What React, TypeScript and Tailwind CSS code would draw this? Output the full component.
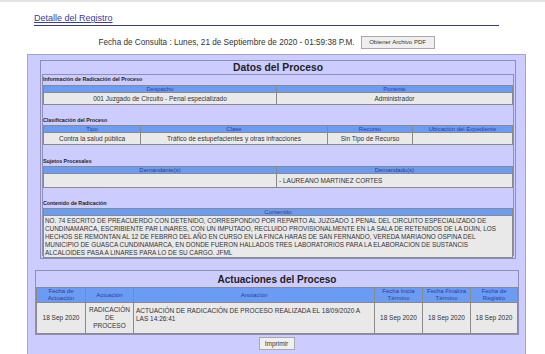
import React from 'react';

// celdas de tabla (rejilla con bordes)
const hd = 'h-[7px] bg-[#6b9cf4] text-[#2c3c9c] border-r border-b border-[#8a8a8a] text-center text-[6px] leading-[6px] whitespace-nowrap overflow-hidden';
const cell = 'bg-[#e9e9e9] text-[#333] border-r border-b border-[#8a8a8a] text-[6.5px] leading-[8px] flex items-center overflow-hidden whitespace-nowrap';

const Label: React.FC<{ text: string; className: string }> = ({ text, className }) => (
  <div className={`text-[5.3px] font-bold text-[#222] ${className}`}>{text}</div>
);

export default function App() {
  const contenido = [
    'NO. 74 ESCRITO DE PREACUERDO CON DETENIDO, CORRESPONDIO POR REPARTO AL JUZGADO 1 PENAL DEL CIRCUITO ESPECIALIZADO DE',
    'CUNDINAMARCA, ESCRIBIENTE PAR LINARES, CON UN IMPUTADO, RECLUIDO PROVISIONALMENTE EN LA SALA DE RETENIDOS DE LA DIJIN, LOS',
    'HECHOS SE REMONTAN AL 12 DE FEBRRO DEL AÑO EN CURSO EN LA FINCA HARAS DE SAN FERNANDO, VEREDA MARIAONO OSPINA DEL',
    'MUNICIPIO DE GUASCA CUNDINAMARCA, EN DONDE FUERON HALLADOS TRES LABORATORIOS PARA LA ELABORACION DE SUSTANCIS',
    'ALCALOIDES PASA A LINARES PARA LO DE SU CARGO. JFML',
  ];

  return (
    <div className="h-screen overflow-hidden bg-white font-['Liberation_Sans',Arial,sans-serif] text-[#333]">
      <div className="h-[2px] bg-[#e4e4e4]" />

      {/* encabezado */}
      <div className="ml-[34px] w-[465px] pt-[11px]">
        <div className="border-b border-[#3a3a80] pb-px text-[9px] leading-[11px]">
          <a className="text-[#3a3aa0] underline">Detalle del Registro</a>
        </div>
        <div className="mt-[10px] flex h-[13px] items-center justify-center gap-[6px]">
          <span className="text-[8.2px] leading-[10px] text-[#333]">
            Fecha de Consulta : Lunes, 21 de Septiembre de 2020 - 01:59:38 P.M.
          </span>
          <button className="h-[13px] w-[74px] border border-[#a9a9a9] bg-[#efefef] text-[6px] leading-[11px] text-[#333]">
            Obtener Archivo PDF
          </button>
        </div>
      </div>

      {/* contenedor lila */}
      <div className="ml-[27px] mt-[5px] h-[320px] w-[499px] border border-[#a4a4d4] bg-[#ccccff] pt-[5px]">
        {/* Datos del Proceso */}
        <div className="ml-[12px] w-[476px] border border-[#8e8eb8]">
          <div className="h-[13px] text-center text-[10.3px] font-bold leading-[13px] text-[#222]">Datos del Proceso</div>
          <div className="mx-px mb-[2px] h-[182px] border border-[#8e8eb8]">
            <Label text="Información de Radicación del Proceso" className="h-[10px] leading-[9px]" />
            <div className="grid grid-cols-[233px_1fr] border-l border-t border-[#8a8a8a]">
              <div className={hd}>Despacho</div>
              <div className={hd}>Ponente</div>
              <div className={`${cell} h-[12px] justify-center`}>001 Juzgado de Circuito - Penal especializado</div>
              <div className={`${cell} h-[12px] justify-center`}>Administrador</div>
            </div>

            <Label text="Clasificación del Proceso" className="mt-[11px] h-[9px] leading-[9px]" />
            <div className="grid grid-cols-[97px_187px_85px_1fr] border-l border-t border-[#8a8a8a]">
              <div className={hd}>Tipo</div>
              <div className={hd}>Clase</div>
              <div className={hd}>Recurso</div>
              <div className={hd}>Ubicación del Expediente</div>
              <div className={`${cell} h-[12px] justify-center`}>Contra la salud pública</div>
              <div className={`${cell} h-[12px] justify-center`}>Tráfico de estupefacientes y otras infracciones</div>
              <div className={`${cell} h-[12px] justify-center`}>Sin Tipo de Recurso</div>
              <div className={`${cell} h-[12px]`}></div>
            </div>

            <Label text="Sujetos Procesales" className="mt-[12px] h-[9px] leading-[9px]" />
            <div className="grid grid-cols-[233px_1fr] border-l border-t border-[#8a8a8a]">
              <div className={hd}>Demandante(s)</div>
              <div className={hd}>Demandado(s)</div>
              <div className={`${cell} h-[14px]`}></div>
              <div className={`${cell} h-[14px] pl-[2px]`}>- LAUREANO MARTINEZ CORTES</div>
            </div>

            <Label text="Contenido de Radicación" className="mt-[11px] h-[9px] leading-[9px]" />
            <div className="border-l border-t border-[#8a8a8a]">
              <div className={hd}>Contenido</div>
              <div className="h-[42px] border-r border-b border-[#8a8a8a] bg-[#e9e9e9] px-px pt-px text-[6.4px] leading-[8px] whitespace-nowrap text-[#333]">
                {contenido.map((line) => (
                  <div key={line}>{line}</div>
                ))}
              </div>
            </div>
          </div>
        </div>

        {/* Actuaciones del Proceso */}
        <div className="ml-[7px] mt-[11px] w-[484px] border border-[#8e8eb8]">
          <div className="h-[16px] text-center text-[10px] font-bold leading-[17px] text-[#222]">Actuaciones del Proceso</div>
          <div className="grid grid-cols-[49px_48px_241px_48px_48px_1fr] border-l border-t border-[#8a8a8a]">
            <div className={`${hd} flex h-[15px] items-center justify-center leading-[7px]`}>Fecha de<br />Actuación</div>
            <div className={`${hd} flex h-[15px] items-center justify-center`}>Actuación</div>
            <div className={`${hd} flex h-[15px] items-center justify-center`}>Anotación</div>
            <div className={`${hd} flex h-[15px] items-center justify-center leading-[7px]`}>Fecha Inicia<br />Término</div>
            <div className={`${hd} flex h-[15px] items-center justify-center leading-[7px]`}>Fecha Finaliza<br />Término</div>
            <div className={`${hd} flex h-[15px] items-center justify-center leading-[7px]`}>Fecha de<br />Registro</div>

            <div className={`${cell} h-[31px] justify-center`}>18 Sep 2020</div>
            <div className={`${cell} h-[31px] justify-center text-center leading-[8.5px]`}>
              RADICACIÓN<br />DE<br />PROCESO
            </div>
            <div className={`${cell} h-[31px] items-start px-[2px] pt-[4px] leading-[8px]`}>
              ACTUACIÓN DE RADICACIÓN DE PROCESO REALIZADA EL 18/09/2020 A<br />LAS 14:26:41
            </div>
            <div className={`${cell} h-[31px] justify-center`}>18 Sep 2020</div>
            <div className={`${cell} h-[31px] justify-center`}>18 Sep 2020</div>
            <div className={`${cell} h-[31px] justify-center`}>18 Sep 2020</div>
          </div>
        </div>
        <div className="mt-[2px] flex justify-center">
          <button className="h-[13px] w-[36px] border border-[#a9a9a9] bg-[#efefef] text-[6.5px] leading-[11px] text-[#333]">
            Imprimir
          </button>
        </div>
      </div>
    </div>
  );
}
